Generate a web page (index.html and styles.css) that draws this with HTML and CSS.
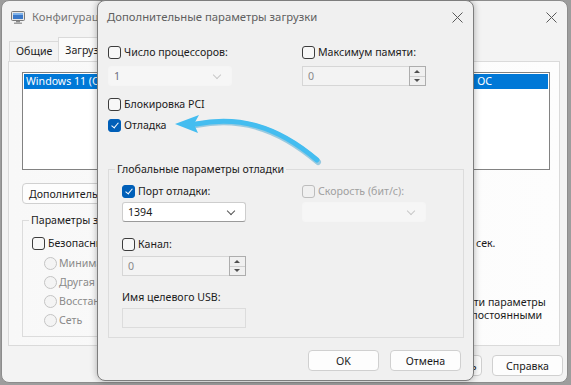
FILE: index.html
```html
<!DOCTYPE html>
<html lang="ru">
<head>
  <meta charset="utf-8">
  <title>Конфигурация системы</title>
  <link rel="stylesheet" href="styles.css">
</head>
<body>

  <!-- background window: msconfig, Boot tab -->
  <div class="win main-win">
    <div class="titlebar">
      <svg class="app-icon" width="14" height="13" viewBox="0 0 14 13">
        <rect x="0.5" y="0.5" width="13" height="9" rx="1" fill="#e6e6e6" stroke="#7a7a7a"/>
        <rect x="2" y="2" width="10" height="6" fill="#3a78c8"/>
        <rect x="2" y="2" width="10" height="2" fill="#7fb2ea"/>
        <rect x="5" y="10" width="4" height="1.5" fill="#8a8a8a"/>
        <rect x="3" y="11.5" width="8" height="1.5" fill="#a0a0a0"/>
      </svg>
      <span class="title">Конфигурация системы</span>
      <svg class="close" width="11" height="11" viewBox="0 0 11 11">
        <path d="M0.5 0.5 L10.5 10.5 M10.5 0.5 L0.5 10.5" stroke="#5a5a5a" stroke-width="1"/>
      </svg>
    </div>

    <div class="tabs">
      <span class="tab">Общие</span>
      <span class="tab active">Загрузка</span>
      <span class="tab">Службы</span>
      <span class="tab">Автозагрузка</span>
      <span class="tab">Сервис</span>
    </div>

    <div class="tab-panel">
      <div class="listbox">
        <div class="list-item selected">
          <span>Windows 11 (C:\WINDOWS) : Текущая ОС; по умолчанию</span>
          <span>ОС</span>
        </div>
      </div>

      <div class="btn-row">
        <button class="btn">Дополнительные параметры...</button>
        <button class="btn">Использовать по умолчанию</button>
      </div>

      <div class="boot-opts">
        <fieldset class="group">
          <legend>Параметры загрузки</legend>
          <label class="check-row"><span class="box"></span>Безопасный режим</label>
          <div class="radios">
            <label class="radio-row"><span class="dot"></span>Минимальная загрузка</label>
            <label class="radio-row"><span class="dot"></span>Другая оболочка</label>
            <label class="radio-row"><span class="dot"></span>Восстановление Active Directory</label>
            <label class="radio-row"><span class="dot"></span>Сеть</label>
          </div>
        </fieldset>

        <div class="side-col">
          <div class="timeout-row">
            <span>Таймаут:</span>
            <span class="timeout-input">30</span>
            <span class="unit">сек.</span>
          </div>
          <label class="check-row persist"><span class="box"></span><span class="wrap">Сделать эти параметры загрузки постоянными</span></label>
        </div>
      </div>
    </div>

    <div class="win-buttons">
      <button class="btn">ОК</button>
      <button class="btn">Отмена</button>
      <button class="btn">Применить</button>
      <button class="btn">Справка</button>
    </div>
  </div>

  <!-- front dialog -->
  <div class="win dialog">
    <div class="titlebar">
      <span class="title">Дополнительные параметры загрузки</span>
      <svg class="close" width="11" height="11" viewBox="0 0 11 11">
        <path d="M0.5 0.5 L10.5 10.5 M10.5 0.5 L0.5 10.5" stroke="#5a5a5a" stroke-width="1"/>
      </svg>
    </div>

    <div class="dlg-body">
      <div class="grid-top">
        <label class="check-row"><span class="box"></span>Число процессоров:</label>
        <label class="check-row"><span class="box"></span>Максимум памяти:</label>
        <div class="combo disabled"><span>1</span><span class="chev"></span></div>
        <div class="spin disabled"><span>0</span><span class="spin-btn"><i class="up"></i><i class="down"></i></span></div>
      </div>

      <label class="check-row pci"><span class="box"></span>Блокировка PCI</label>
      <label class="check-row debug"><span class="box checked"></span>Отладка</label>

      <fieldset class="group debug-group">
        <legend>Глобальные параметры отладки</legend>
        <div class="grid-dbg">
          <label class="check-row"><span class="box checked"></span>Порт отладки:</label>
          <label class="check-row muted"><span class="box off"></span>Скорость (бит/с):</label>
          <div class="combo"><span>1394</span><span class="chev dark"></span></div>
          <div class="combo disabled"><span></span><span class="chev"></span></div>
        </div>
        <label class="check-row channel"><span class="box"></span>Канал:</label>
        <div class="spin disabled narrow"><span>0</span><span class="spin-btn"><i class="up"></i><i class="down"></i></span></div>
        <div class="usb-label">Имя целевого USB:</div>
        <div class="textbox"></div>
      </fieldset>

      <div class="dlg-buttons">
        <button class="btn">OK</button>
        <button class="btn">Отмена</button>
      </div>
    </div>
  </div>

  <!-- callout arrow drawn over the dialog -->
  <svg class="arrow" width="571" height="385" viewBox="0 0 571 385">
    <path d="M196 125 C 238 117, 276 126, 318 162" fill="none" stroke="#2f9ccb" stroke-width="6" stroke-linecap="round" opacity="0.45"/>
    <path d="M196 124 C 238 116, 276 125, 317 160" fill="none" stroke="#44bdf0" stroke-width="5" stroke-linecap="round"/>
    <path d="M175 124 L199 115 L194 124 L198 133 Z" fill="#44bdf0"/>
  </svg>

</body>
</html>
```

FILE: styles.css
```css
* {
  box-sizing: border-box;
}

body {
  margin: 0;
  width: 571px;
  height: 385px;
  position: relative;
  overflow: hidden;
  background-color: #9d9d9d;
  color: #1b1b1b;
  font-family: "Noto Sans", sans-serif;
  font-size: 10.6px;
  line-height: 16px;
}

button {
  font-family: inherit;
  font-size: 10.6px;
  color: #1b1b1b;
}

/* windows on the desktop */
.win {
  position: absolute;
  border: 1px solid #8c8c8c;
  border-radius: 8px;
  background-color: #f3f3f3;
  overflow: hidden;
}

.main-win {
  left: 1px;
  top: 0;
  width: 567px;
  height: 383px;
}

.dialog {
  left: 97px;
  top: 0;
  width: 377px;
  height: 381px;
  background-color: #f0f0f0;
  border-color: #7d7d7d;
  box-shadow: 0 0 7px rgba(0, 0, 0, 0.3);
}

.titlebar {
  display: flex;
  align-items: center;
  height: 32px;
  padding-left: 9px;
  padding-right: 10px;
}

.title {
  flex: 1;
  color: #5f5f5f;
  font-size: 11.3px;
  white-space: nowrap;
}

.app-icon {
  margin-right: 7px;
}

.main-win .title {
  color: #767676;
}

/* tabs */
.tabs {
  display: flex;
  align-items: flex-end;
  height: 28px;
  padding-left: 7px;
}

.tab {
  height: 20px;
  padding: 1px 6px 0;
  border: 1px solid #dadada;
  border-bottom: none;
  background-color: #f3f3f3;
  white-space: nowrap;
}

.tab.active {
  height: 24px;
  padding-top: 4px;
  margin: 0 -1px;
  background-color: #fbfbfb;
}

.tab-panel {
  height: 285px;
  margin: 0 7px 0 6px;
  padding: 10px 9px 0 13px;
  border: 1px solid #dadada;
  background: linear-gradient(90deg, #f8f8f8, #fdfdfd);
}

.listbox {
  height: 98px;
  padding: 1px;
  border: 1px solid #828282;
  background-color: #fff;
}

.list-item {
  display: flex;
  justify-content: space-between;
  height: 15px;
  padding: 0 56px 0 2px;
  line-height: 15px;
  white-space: nowrap;
  overflow: hidden;
}

.list-item.selected {
  background-color: #0078d7;
  color: #fff;
}

.btn-row {
  display: flex;
  gap: 8px;
  margin-top: 13px;
}

.btn {
  height: 21px;
  padding: 0 6px;
  border: 1px solid #d0d0d0;
  border-radius: 4px;
  background-color: #fdfdfd;
  line-height: 18px;
  white-space: nowrap;
}

.boot-opts {
  display: flex;
  margin-top: 8px;
}

/* group boxes */
.group {
  margin: 0;
  border: 1px solid #dcdcdc;
  min-width: 0;
}

.group legend {
  padding: 0 2px;
  line-height: 16px;
}

.boot-opts .group {
  flex: none;
  width: 290px;
  height: 125px;
  padding: 0 0 0 9px;
}

.boot-opts .group legend {
  margin-left: -3px;
}

.side-col {
  display: flex;
  flex-direction: column;
  padding-left: 70px;
}

.timeout-row {
  display: flex;
  align-items: center;
  gap: 6px;
  margin-top: 21px;
  white-space: nowrap;
}

.timeout-input {
  width: 40px;
  height: 20px;
  padding-left: 4px;
  border: 1px solid #cfcfcf;
  background-color: #fff;
}

.unit {
  margin-left: -3px;
}

.side-col .persist {
  align-items: flex-start;
  height: auto;
  margin-top: 43px;
  margin-left: 26px;
}

.persist .wrap {
  width: 130px;
  line-height: 13px;
  white-space: normal;
}

/* checkboxes */
.check-row {
  display: flex;
  align-items: center;
  height: 16px;
  white-space: nowrap;
}

.box {
  flex: none;
  width: 13px;
  height: 13px;
  margin-right: 3px;
  border: 1px solid #3c3c3c;
  border-radius: 3px;
  background-color: #f7f7f7;
  position: relative;
}

.box.checked {
  border-color: #005fb8;
  background-color: #005fb8;
}

.box.checked::after {
  content: "";
  position: absolute;
  left: 3.5px;
  top: 1.5px;
  width: 3px;
  height: 6px;
  border: solid #fff;
  border-width: 0 1px 1px 0;
  transform: rotate(40deg);
}

.box.off {
  border-color: #bdbdbd;
  background-color: #f0f0f0;
}

.muted {
  color: #a0a0a0;
}

.boot-opts .group .check-row {
  margin-top: 7px;
}

.radios {
  display: flex;
  flex-direction: column;
  gap: 3px;
  margin-top: 4px;
  padding-left: 12px;
}

.radio-row {
  display: flex;
  align-items: center;
  height: 16px;
  color: #8a8a8a;
  white-space: nowrap;
}

.dot {
  width: 13px;
  height: 13px;
  margin-right: 2px;
  border: 1px solid #c4c4c4;
  border-radius: 50%;
  background-color: #f4f4f4;
}

.win-buttons {
  display: flex;
  justify-content: flex-end;
  gap: 10px;
  margin-top: 9px;
  padding-right: 4px;
}

.win-buttons .btn,
.dlg-buttons .btn {
  width: 71px;
}

/* dialog body */
.dlg-body {
  padding-left: 10px;
}

.grid-top {
  display: grid;
  grid-template-columns: 194px 124px;
  row-gap: 6px;
  margin-top: 11px;
}

.combo,
.spin {
  display: flex;
  align-items: center;
  justify-content: space-between;
  width: 124px;
  height: 20px;
  padding-left: 5px;
  border: 1px solid #cdcdcd;
  border-bottom-color: #9a9a9a;
  border-radius: 3px;
  background-color: #fff;
}

.combo.disabled {
  border-color: #f5f5f5;
  background-color: #f6f6f6;
  color: #6e6e7e;
}

.spin.disabled {
  border: 1px solid #d6d6d6;
  border-radius: 0;
  background-color: #f3f3f3;
  color: #8a8a8a;
}

.chev {
  width: 6px;
  height: 6px;
  margin-right: 11px;
  margin-bottom: 3px;
  border: solid #c8c8c8;
  border-width: 0 1px 1px 0;
  transform: rotate(45deg);
}

.chev.dark {
  border-color: #555;
}

.spin {
  padding-right: 0;
}

.spin-btn {
  display: flex;
  flex-direction: column;
  width: 17px;
  height: 20px;
  margin: -1px -1px -1px 0;
  border: 1px solid #adadad;
  background-color: #f0f0f0;
}

.spin-btn i {
  flex: 1;
  position: relative;
}

.spin-btn .up {
  border-bottom: 1px solid #d0d0d0;
}

.spin-btn i::after {
  content: "";
  position: absolute;
  left: 4px;
  top: 3px;
  border-left: 3.5px solid transparent;
  border-right: 3.5px solid transparent;
}

.spin-btn .up::after {
  border-bottom: 3px solid #505050;
}

.spin-btn .down::after {
  top: 2px;
  border-top: 3px solid #505050;
}

.pci {
  margin-top: 10px;
}

.debug {
  margin-top: 5px;
}

.debug-group {
  width: 356px;
  margin-top: 28px;
  padding: 0 0 9px 13px;
}

.debug-group legend {
  margin-left: -7px;
}

.grid-dbg {
  display: grid;
  grid-template-columns: 180px 124px;
  row-gap: 3px;
  margin-top: 6px;
}

.channel {
  margin-top: 14px;
}

.narrow {
  margin-top: 4px;
}

.usb-label {
  margin-top: 13px;
  height: 16px;
}

.textbox {
  width: 124px;
  height: 20px;
  margin-top: 3px;
  border: 1px solid #dcdcdc;
  background-color: #f0f0f0;
}

.dlg-buttons {
  display: flex;
  justify-content: flex-end;
  gap: 11px;
  margin-top: 12px;
  padding-right: 12px;
}

/* overlay arrow */
.arrow {
  position: absolute;
  left: 0;
  top: 0;
  pointer-events: none;
}
```
